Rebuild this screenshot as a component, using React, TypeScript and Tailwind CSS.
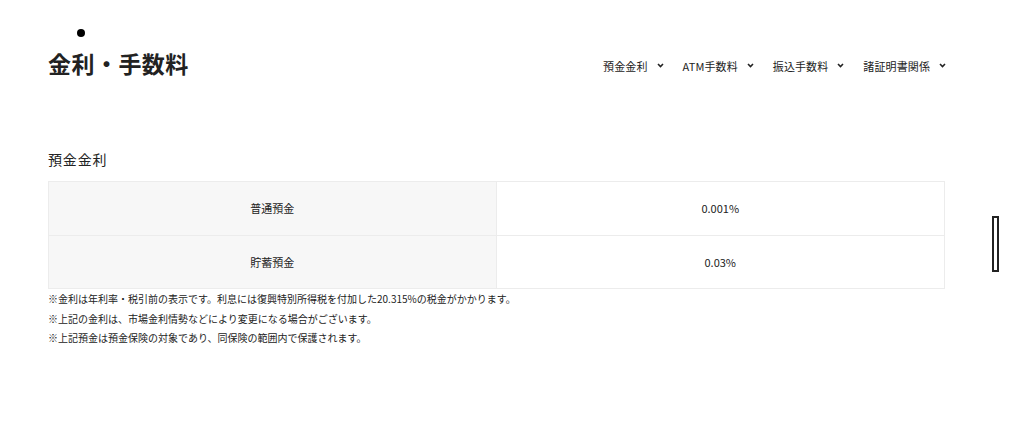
import React from "react";

const navItems = ["預金金利", "ATM手数料", "振込手数料", "諸証明書関係"];

const rows = [
	{ label: "普通預金", value: "0.001%" },
	{ label: "貯蓄預金", value: "0.03%" },
];

const notes = [
	"※金利は年利率・税引前の表示です。利息には復興特別所得税を付加した20.315%の税金がかかります。",
	"※上記の金利は、市場金利情勢などにより変更になる場合がございます。",
	"※上記預金は預金保険の対象であり、同保険の範囲内で保護されます。",
];

function Chevron() {
	return (
		<svg width="7" height="5" viewBox="0 0 7 5" className="ml-[9px]">
			<path d="M1 1l2.5 2.5L6 1" fill="none" stroke="#222" strokeWidth="1.6" />
		</svg>
	);
}

export default function App() {
	return (
		<div
			className="relative w-[1024px] h-[427px] bg-white text-[#222] overflow-hidden"
			style={{ fontFamily: '"Noto Sans CJK JP", "Noto Sans", sans-serif' }}
		>
			{/* HEADER */}
			<div className="flex items-end justify-between pl-[48px] pr-[78px] pt-[46px]">
				<div className="relative">
					<span className="absolute left-[29px] top-[-17px] w-[8px] h-[8px] rounded-full bg-black" />
					<h1 className="text-[23px] leading-[34px] font-bold tracking-[0.02em]">
						金利・手数料
					</h1>
				</div>
				<nav className="flex items-center gap-[19px] pb-[6px] text-[11px] tracking-[0.01em]">
					{navItems.map((item) => (
						<div key={item} className="flex items-center">
							<span>{item}</span>
							<Chevron />
						</div>
					))}
				</nav>
			</div>

			{/* BODY */}
			<div className="px-[48px] pr-[79px] pt-[69px]">
				<h2 className="text-[14px] leading-[20px] tracking-[0.06em] mb-[12px]">預金金利</h2>
				<div className="border border-[#ececec]">
					{rows.map((row, i) => (
						<div
							key={row.label}
							className={`grid grid-cols-2 h-[53px] text-[11px] ${i > 0 ? "border-t border-[#ececec]" : ""}`}
						>
							<div className="flex items-center justify-center bg-[#f7f7f7] border-r border-[#ececec]">
								{row.label}
							</div>
							<div className="flex items-center justify-center">{row.value}</div>
						</div>
					))}
				</div>
				<div className="text-[10px] leading-[19.5px]">
					{notes.map((n) => (
						<p key={n}>{n}</p>
					))}
				</div>
			</div>

			{/* SCROLL INDICATOR */}
			<div className="absolute left-[992px] top-[216px] w-[7px] h-[56px] border-2 border-[#222] bg-white" />
		</div>
	);
}
